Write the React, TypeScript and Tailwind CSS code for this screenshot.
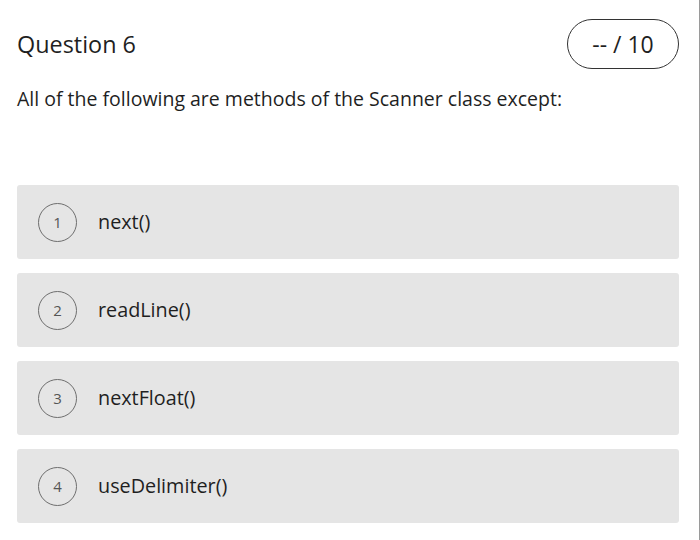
import React from "react";

const options = ["next()", "readLine()", "nextFloat()", "useDelimiter()"];

export default function App() {
  return (
    <div
      className="w-[700px] h-[540px] bg-white border-r border-[#9a9a9a] pl-[17px] pr-[20px] pt-[19px] text-[#1f1f1f]"
      style={{ fontFamily: '"Open Sans", "Liberation Sans", sans-serif' }}
    >
      <div className="flex items-center justify-between">
        <h1 className="text-[23.4px] leading-[30px] font-normal text-[#1f1f1f]">Question 6</h1>
        <div className="w-[112px] h-[50px] rounded-full border-[1.5px] border-[#333] flex items-center justify-center text-[23px] leading-none text-[#1f1f1f]">
          -- / 10
        </div>
      </div>
      <p className="mt-[17px] text-[19.5px] leading-[26px] text-[#1f1f1f]">
        All of the following are methods of the Scanner class except:
      </p>
      <div className="mt-[73px] flex flex-col gap-[14px]">
        {options.map((opt, i) => (
          <div
            key={opt}
            className="h-[74px] w-[662px] rounded-[3px] bg-[#e5e5e5] flex items-center pl-[21px]"
          >
            <div className="w-[39px] h-[39px] rounded-full border-[1.5px] border-[#6e6e6e] flex items-center justify-center text-[15px] text-[#555]">
              {i + 1}
            </div>
            <span className="ml-[21px] text-[19.8px] text-[#1f1f1f]">{opt}</span>
          </div>
        ))}
      </div>
    </div>
  );
}
